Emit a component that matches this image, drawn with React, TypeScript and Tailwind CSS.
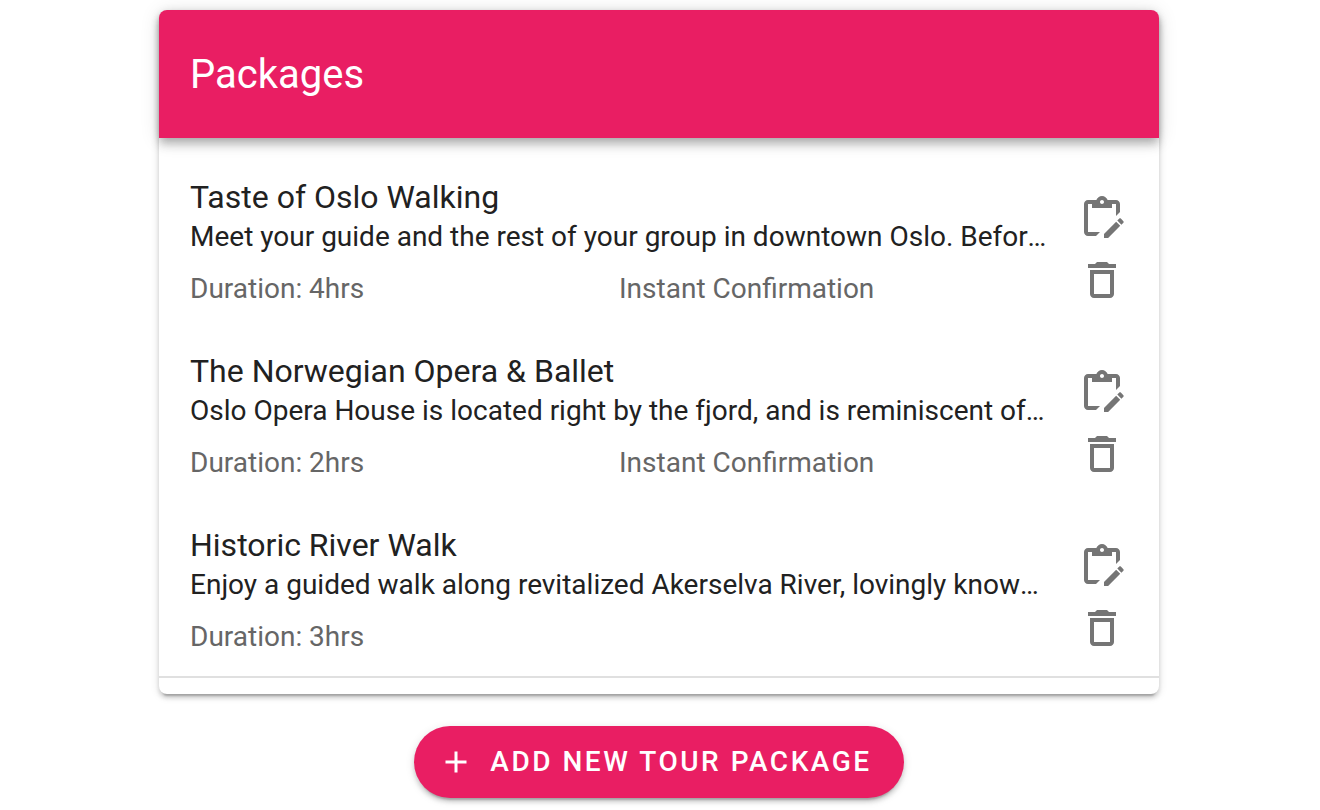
type Tour = { title: string; summary: string; duration: string; instant: boolean };

const tours: Tour[] = [
  {
    title: 'Taste of Oslo Walking',
    summary: 'Meet your guide and the rest of your group in downtown Oslo. Before you set out, enjoy a short introduction.',
    duration: '4hrs',
    instant: true,
  },
  {
    title: 'The Norwegian Opera & Ballet',
    summary: 'Oslo Opera House is located right by the fjord, and is reminiscent of a glacier floating in the water.',
    duration: '2hrs',
    instant: true,
  },
  {
    title: 'Historic River Walk',
    summary: 'Enjoy a guided walk along revitalized Akerselva River, lovingly known as the green lung of the city.',
    duration: '3hrs',
    instant: false,
  },
];

function EditIcon() {
  return (
    <svg viewBox="0 0 24 24" className="size-12" fill="currentColor" aria-hidden="true">
      <path d="M21.04 12.13C21.18 12.13 21.31 12.19 21.42 12.3L22.7 13.58C22.92 13.79 22.92 14.14 22.7 14.35L21.7 15.35L19.65 13.3L20.65 12.3C20.76 12.19 20.9 12.13 21.04 12.13M19.07 13.88L21.12 15.93L15.06 22H13V19.94L19.07 13.88M11 19L9 21H5C3.9 21 3 20.1 3 19V5C3 3.9 3.9 3 5 3H9.18C9.6 1.84 10.7 1 12 1C13.3 1 14.4 1.84 14.82 3H19C20.1 3 21 3.9 21 5V9L19 11V5H17V7H7V5H5V19H11M12 3C11.45 3 11 3.45 11 4C11 4.55 11.45 5 12 5C12.55 5 13 4.55 13 4C13 3.45 12.55 3 12 3Z" />
    </svg>
  );
}

function DeleteIcon() {
  return (
    <svg viewBox="0 0 24 24" className="size-12" fill="currentColor" aria-hidden="true">
      <path d="M6 19C6 20.1 6.9 21 8 21H16C17.1 21 18 20.1 18 19V7H6V19M8 9H16V19H8V9M15.5 4L14.5 3H9.5L8.5 4H5V6H19V4H15.5Z" />
    </svg>
  );
}

function TourItem({ tour }: { tour: Tour }) {
  return (
    <li className="flex gap-[30px] pr-[33px] pl-[31px]">
      <div className="min-w-0 flex-1 pt-[23px] pb-[19px]">
        <h2 className="truncate text-[32px] leading-10 text-[#212121]">{tour.title}</h2>
        <p className="truncate text-[28px] leading-10 text-[#212121]">{tour.summary}</p>
        <div className="mt-3 grid grid-cols-2 text-[28px] leading-10 text-[#666666]">
          <span>Duration: {tour.duration}</span>
          {tour.instant && <span>Instant Confirmation</span>}
        </div>
      </div>
      <div className="flex flex-col gap-[14px] pt-10 text-[#757575]">
        <button type="button" aria-label={`Edit ${tour.title}`}>
          <EditIcon />
        </button>
        <button type="button" aria-label={`Delete ${tour.title}`}>
          <DeleteIcon />
        </button>
      </div>
    </li>
  );
}

export default function App() {
  return (
    <main className="flex flex-col items-center gap-8 bg-white pt-[10px] pr-[18px] pb-3 pl-4 font-[Roboto,sans-serif]">
      <section className="w-full max-w-[1000px] rounded-lg bg-white shadow-[0_6px_2px_-4px_rgba(0,0,0,0.2),0_4px_4px_0_rgba(0,0,0,0.14),0_2px_10px_0_rgba(0,0,0,0.12)]">
        <header className="flex h-32 items-center rounded-t-lg bg-[#e91e63] pt-[2px] pr-[33px] pl-[31px] shadow-[0_4px_8px_-2px_rgba(0,0,0,0.2),0_8px_10px_0_rgba(0,0,0,0.14),0_2px_20px_0_rgba(0,0,0,0.12)]">
          <h1 className="text-[40px] leading-[60px] text-white">Packages</h1>
        </header>
        <ul className="pt-4">
          {tours.map((tour) => (
            <TourItem key={tour.title} tour={tour} />
          ))}
        </ul>
        <hr className="border-t-2 border-[#e0e0e0]" />
        <div className="h-4" />
      </section>
      <button
        type="button"
        className="flex h-[72px] items-center gap-4 rounded-full bg-[#e91e63] pr-8 pl-6 text-[28px] font-medium tracking-[0.09em] text-white shadow-[0_6px_2px_-4px_rgba(0,0,0,0.2),0_4px_4px_0_rgba(0,0,0,0.14),0_2px_10px_0_rgba(0,0,0,0.12)]"
      >
        <svg viewBox="0 0 24 24" className="size-9" fill="currentColor" aria-hidden="true">
          <path d="M19 13H13V19H11V13H5V11H11V5H13V11H19V13Z" />
        </svg>
        ADD NEW TOUR PACKAGE
      </button>
    </main>
  );
}
